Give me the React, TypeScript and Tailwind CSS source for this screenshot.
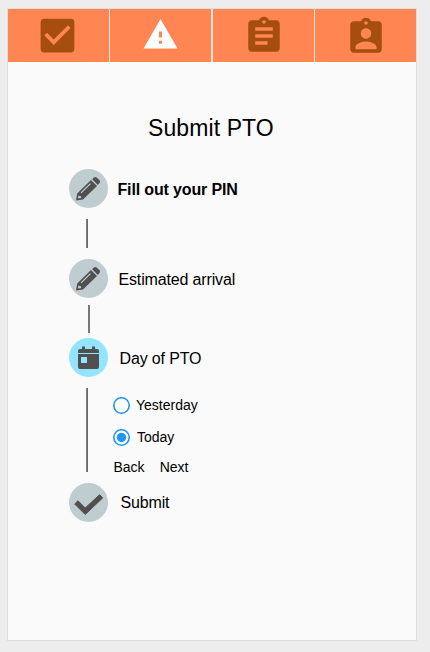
import React from "react";
import { MdAssignment, MdAssignmentInd, MdCheckBox, MdWarning } from "react-icons/md";

function Tab({ children, className = "" }: { children: React.ReactNode; className?: string }) {
  return <button className={`flex h-full flex-1 items-start bg-[#ff8552] text-[#a54e0f] ${className}`}>{children}</button>;
}

function Badge({ children, className = "bg-[#bfcdd1]" }: { children: React.ReactNode; className?: string }) {
  return (
    <span className={`flex size-[39px] shrink-0 items-center justify-center rounded-full text-[#505050] ${className}`}>
      {children}
    </span>
  );
}

function PencilIcon() {
  return (
    <svg width="39" height="39" viewBox="0 0 39 39" fill="currentColor">
      <path d="M23.200 10.200l1.700-1.700q1.400-1.200 2.800 0l2.800 2.800q1.200 1.400 0 2.800l-1.700 1.800z" />
      <path
        fillRule="evenodd"
        d="M22 11l6 6L14 30.400 7 31.600l1.200-7.200zM21 14.200l-9.400 9.200.9.900 9.400-9.200zM9.600 26.200l-.7 3.400 3.400-.7-.4-1.700-1.400-.2z"
      />
    </svg>
  );
}

function CheckIcon() {
  return (
    <svg width="39" height="39" viewBox="0 0 39 39" fill="currentColor" stroke="currentColor" strokeWidth="1" strokeLinejoin="round">
      <path d="M5.700 21l3.300-3.200 7.200 7.200L30.600 11.700l3.100 3.200-17.500 16.600z" />
    </svg>
  );
}

function CalendarIcon() {
  return (
    <svg width="21" height="24" viewBox="0 0 21 24" fill="currentColor">
      <path
        fillRule="evenodd"
        d="M4 .500h3V3h7V.500h3V3h2q2 0 2 2v2H0V5q0-2 2-2h2zM0 8h21v13q0 2-2 2H2q-2 0-2-2zM3 11v6h6v-6z"
      />
    </svg>
  );
}

function Radio({ checked = false }: { checked?: boolean }) {
  return (
    <svg width="17" height="17" viewBox="0 0 17 17">
      <circle cx="8.500" cy="8.500" r="7.700" fill="white" stroke="#2196f3" strokeWidth="1.600" />
      {checked && <circle cx="8.500" cy="8.500" r="4.700" fill="#2196f3" />}
    </svg>
  );
}

export default function App() {
  return (
    <div className="h-[652px] w-[430px] bg-[#ededed] pt-2 pl-[7px] font-['Liberation_Sans',Arial,sans-serif] text-black">
      <main className="h-[633px] w-[410px] border border-[#dedede] bg-[#fafafa]">
        <nav className="flex h-[54px] gap-[1.5px] border-b border-white bg-[#ffe5da]">
          <Tab><MdCheckBox size={45} className="mt-[4px] ml-[27px]" /></Tab>
          <Tab><MdWarning size={37} className="mt-[7px] ml-[32px] text-white" /></Tab>
          <Tab><MdAssignment size={42} className="mt-[6px] ml-[30px]" /></Tab>
          <Tab><MdAssignmentInd size={42} className="mt-[6.500px] ml-[30px]" /></Tab>
        </nav>
        <h1 className="mt-[50px] ml-[140px] text-[23px] leading-[30px] tracking-[0.1px] whitespace-nowrap">Submit PTO</h1>
        <section className="mt-[26px] ml-[60.5px] text-base tracking-[-0.15px]">
          <div className="flex h-[39px] items-center gap-[10px] font-bold">
            <Badge><PencilIcon /></Badge>
            <span className="pt-[3px]">Fill out your PIN</span>
          </div>
          <div className="mt-[11px] ml-[17.5px] h-[29px] w-[2px] bg-linear-to-r from-[#8a8a8a] to-[#606060]" />
          <div className="mt-[11px] flex h-[39px] items-center gap-[11px]">
            <Badge><PencilIcon /></Badge>
            <span className="pt-[3px]">Estimated arrival</span>
          </div>
          <div className="mt-[7px] ml-[19.5px] h-[28px] w-[2px] bg-[#777777]" />
          <div className="mt-[5px] flex h-[39px] items-center gap-[12px]">
            <Badge className="bg-[#93e5ff]"><CalendarIcon /></Badge>
            <span className="pt-[3px]">Day of PTO</span>
          </div>
          <div className="flex h-[106px]">
            <div className="mt-[11px] ml-[17.5px] h-[84px] w-[2px] bg-linear-to-r from-[#8a8a8a] to-[#606060]" />
            <div className="ml-[25px] pt-[18px] text-sm leading-5 tracking-normal">
              <div className="flex h-5 items-center gap-[6px]"><Radio /><span>Yesterday</span></div>
              <div className="mt-3 flex h-5 items-center gap-[7px]"><Radio checked /><span>Today</span></div>
              <div className="mt-[10px] ml-[0.5px] flex gap-[15px]"><button>Back</button><button>Next</button></div>
            </div>
          </div>
          <div className="flex h-[39px] items-center gap-[13px]">
            <Badge><CheckIcon /></Badge>
            <span>Submit</span>
          </div>
        </section>
      </main>
    </div>
  );
}
